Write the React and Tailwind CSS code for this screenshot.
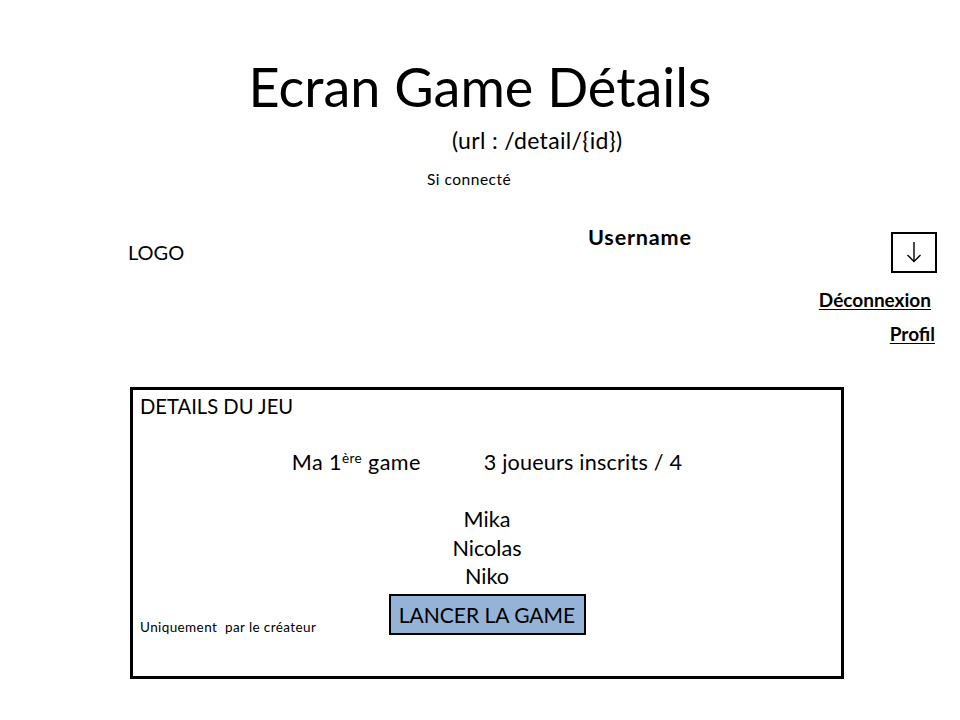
const players = ['Mika', 'Nicolas', 'Niko'];

const ArrowDown = () => (
  <svg width="16" height="22" viewBox="0 0 16 22" fill="none" stroke="black" strokeWidth="1.4">
    <path d="M8 1 V20.5" />
    <path d="M1.5 14 L8 20.5 L14.5 14" />
  </svg>
);

export default function App() {
  return (
    <div className="w-[960px] h-[720px] bg-white text-black font-['Lato',sans-serif] overflow-hidden">
      {/* en-tête de la maquette */}
      <h1 className="pt-[60px] text-center text-[54px] leading-none font-normal">Ecran Game Détails</h1>
      <p className="mt-[15px] ml-[452px] text-[23px] leading-none tracking-[0.35px]">(url : /detail/{'{'}id{'}'})</p>
      <p className="mt-[20px] ml-[427px] text-[15.5px] leading-none tracking-[0.5px]">Si connecté</p>

      {/* barre de navigation */}
      <div className="mt-[39px] h-[160px] flex items-start">
        <div className="ml-[128px] w-[460px] mt-[15px] text-[20px] leading-none">LOGO</div>
        <div className="flex-1 text-[21.6px] leading-none font-bold tracking-[0.8px]">Username</div>
        <div className="mr-[23px] mt-[5px] flex flex-col items-end">
          <div className="w-[46px] h-[41px] border-2 border-black flex items-center justify-center">
            <ArrowDown />
          </div>
          <a className="mt-[17px] mr-[6px] text-[19px] leading-none font-bold underline underline-offset-2">
            Déconnexion
          </a>
          <a className="mt-[15px] mr-[2px] text-[19px] leading-none font-bold underline underline-offset-2">
            Profil
          </a>
        </div>
      </div>

      {/* détails du jeu */}
      <div className="ml-[130px] w-[714px] h-[292px] border-[3px] border-black flex flex-col">
        <h2 className="mt-[6px] pl-[7px] text-[20.2px] leading-none">DETAILS DU JEU</h2>
        <div className="mt-[36px] flex justify-center gap-[63px] text-[21.6px] leading-none">
          <span className="tracking-[0.4px]">
            Ma 1<sup className="text-[13.5px]">ère</sup> game
          </span>
          <span className="tracking-[0.2px]">3 joueurs inscrits / 4</span>
        </div>
        <ul className="mt-[32px] text-center text-[21.6px] leading-[28.5px]">
          {players.map((p) => (
            <li key={p}>{p}</li>
          ))}
        </ul>
        <div className="mt-[3px] grid grid-cols-[1fr_auto_1fr]">
          <span className="self-end pl-[7px] text-[13.5px] leading-none tracking-[0.4px]">
            Uniquement&nbsp; par le créateur
          </span>
          <button className="w-[197px] h-[41px] border-2 border-black bg-[#95b3d7] text-[21px] leading-none">
            LANCER LA GAME
          </button>
          <span />
        </div>
      </div>
    </div>
  );
}
